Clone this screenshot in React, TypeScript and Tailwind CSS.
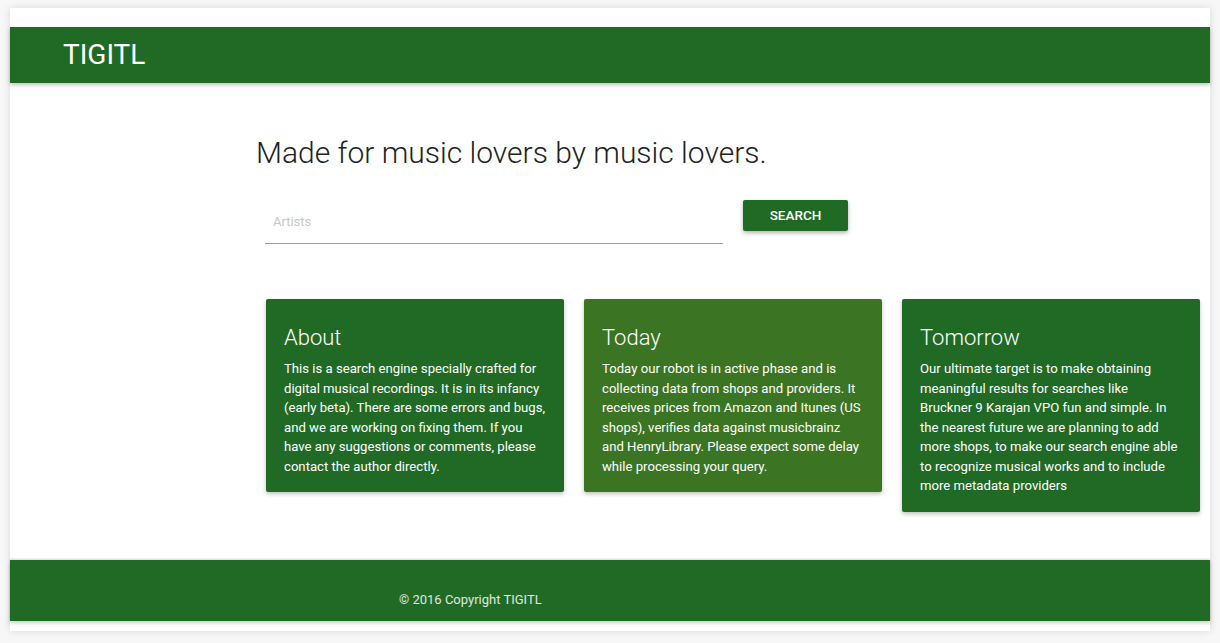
import React from "react";

const cards = [
  {
    title: "About",
    bg: "bg-[#206a25]",
    text: "This is a search engine specially crafted for digital musical recordings. It is in its infancy (early beta). There are some errors and bugs, and we are working on fixing them. If you have any suggestions or comments, please contact the author directly.",
  },
  {
    title: "Today",
    bg: "bg-[#3b7422]",
    text: "Today our robot is in active phase and is collecting data from shops and providers. It receives prices from Amazon and Itunes (US shops), verifies data against musicbrainz and HenryLibrary. Please expect some delay while processing your query.",
  },
  {
    title: "Tomorrow",
    bg: "bg-[#206a25]",
    text: "Our ultimate target is to make obtaining meaningful results for searches like Bruckner 9 Karajan VPO fun and simple. In the nearest future we are planning to add more shops, to make our search engine able to recognize musical works and to include more metadata providers",
  },
];

export default function App() {
  return (
    <div
      className="w-[1220px] h-[643px] bg-[#f7f7f7] pt-[8px] px-[10px] pb-[12px] overflow-hidden"
      style={{ fontFamily: "Roboto, 'Liberation Sans', sans-serif" }}
    >
      <div className="bg-white h-[623px] flex flex-col shadow-[0_0_8px_rgba(0,0,0,0.12)]">
        <div className="h-[19px]" />
        <header className="h-[56px] bg-[#206a25] flex items-center pl-[53px] shadow-[0_2px_4px_rgba(0,0,0,0.25)] relative z-10">
          <span className="text-white text-[28px] leading-none">TIGITL</span>
        </header>
        <main className="flex-1 pl-[246px] pr-[10px]">
          <h1 className="mt-[51px] text-[30px] font-light leading-[38px] text-[#222]">
            Made for music lovers by music lovers.
          </h1>
          <div className="flex items-start ml-[9px] mt-[28px]">
            <div className="w-[458px] h-[44px] border-b border-[#9e9e9e] flex items-center pl-[8px]">
              <span className="text-[13px] text-[#c8c8c8]">Artists</span>
            </div>
            <button className="ml-[20px] w-[105px] h-[31px] bg-[#206a25] text-white text-[13.5px] font-medium rounded-[2px] shadow-[0_2px_4px_rgba(0,0,0,0.3)]">
              SEARCH
            </button>
          </div>
          <div className="flex items-start gap-[20px] ml-[10px] mt-[55px]">
            {cards.map((c) => (
              <div
                key={c.title}
                className={`${c.bg} w-[298px] rounded-[2px] pt-[25px] pb-[16px] px-[18px] shadow-[0_2px_4px_rgba(0,0,0,0.25)] text-white`}
              >
                <div className="text-[22px] font-light leading-[28px] mb-[7px]">{c.title}</div>
                <p className="text-[13.15px] leading-[19.5px]">{c.text}</p>
              </div>
            ))}
          </div>
        </main>
        <footer className="h-[61px] bg-[#206a25] pt-[27px] pl-[389px] shadow-[0_-1px_2px_rgba(0,0,0,0.15),0_2px_4px_rgba(0,0,0,0.2)]">
          <span className="text-[13px] text-white/85">© 2016 Copyright TIGITL</span>
        </footer>
        <div className="h-[10px]" />
      </div>
    </div>
  );
}
